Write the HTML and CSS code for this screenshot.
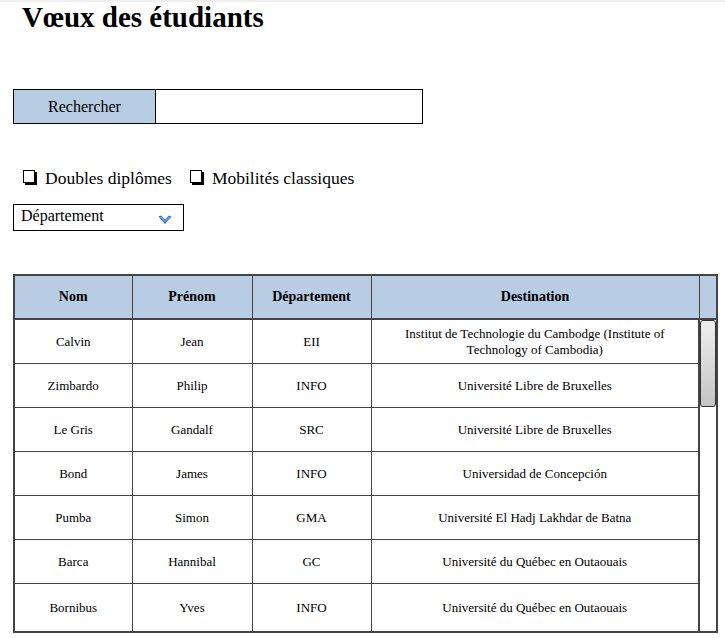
FILE: index.html
```html
<!DOCTYPE html>
<html lang="fr">
<head>
<meta charset="utf-8">
<title>Vœux des étudiants</title>
<link rel="stylesheet" href="styles.css">
</head>
<body>
<div class="topline"></div>
<h1 class="title">Vœux des étudiants</h1>

<div class="search">
  <div class="search-label">Rechercher</div>
  <div class="search-input"></div>
</div>

<div class="filters">
  <label class="check"><span class="box"></span>Doubles diplômes</label>
  <label class="check"><span class="box"></span>Mobilités classiques</label>
</div>

<div class="select">
  <span>Département</span>
  <svg class="chev" width="14" height="10" viewBox="0 0 14 10">
    <path d="M0.5 1.5 L3 0.5 L7 4.5 L11 0.5 L13.5 1.5 L7 9 Z" fill="#2f6fd6"/>
    <path d="M2.5 2 L7 6.5 L11.5 2" fill="none" stroke="#9cc3f5" stroke-width="1"/>
  </svg>
</div>

<table class="grid">
  <colgroup>
    <col class="c1"><col class="c2"><col class="c3"><col class="c4"><col class="c5">
  </colgroup>
  <thead>
    <tr><th>Nom</th><th>Prénom</th><th>Département</th><th>Destination</th><th class="sb-head"></th></tr>
  </thead>
  <tbody>
    <tr><td>Calvin</td><td>Jean</td><td>EII</td><td class="dest">Institut de Technologie du Cambodge (Institute of Technology of Cambodia)</td>
      <td class="sb" rowspan="7"><div class="thumb"></div></td></tr>
    <tr><td>Zimbardo</td><td>Philip</td><td>INFO</td><td>Université Libre de Bruxelles</td></tr>
    <tr><td>Le Gris</td><td>Gandalf</td><td>SRC</td><td>Université Libre de Bruxelles</td></tr>
    <tr><td>Bond</td><td>James</td><td>INFO</td><td>Universidad de Concepción</td></tr>
    <tr><td>Pumba</td><td>Simon</td><td>GMA</td><td>Université El Hadj Lakhdar de Batna</td></tr>
    <tr><td>Barca</td><td>Hannibal</td><td>GC</td><td>Université du Québec en Outaouais</td></tr>
    <tr class="last"><td>Bornibus</td><td>Yves</td><td>INFO</td><td>Université du Québec en Outaouais</td></tr>
  </tbody>
</table>
</body>
</html>
```

FILE: styles.css
```css
html, body {
  margin: 0;
  padding: 0;
  background: #fff;
}
body {
  font-family: "Liberation Serif", "Times New Roman", serif;
  color: #000;
}
.topline {
  height: 2px;
  background: #f0f0f0;
}
.title {
  margin: 0;
  padding-left: 22px;
  font-size: 29px;
  font-weight: bold;
  line-height: 30px;
  height: 87px;
}
.search {
  display: flex;
  margin-left: 13px;
  width: 408px;
  height: 33px;
  border: 1px solid #000;
}
.search-label {
  width: 141px;
  background: #b8cce4;
  border-right: 1px solid #000;
  display: flex;
  align-items: center;
  justify-content: center;
  font-size: 16px;
}
.search-input {
  flex: 1;
}
.filters {
  display: flex;
  gap: 18px;
  margin: 42px 0 0 23px;
  height: 24px;
  align-items: center;
}
.check {
  display: flex;
  align-items: center;
  font-size: 17.5px;
}
.box {
  display: inline-block;
  width: 10px;
  height: 11px;
  border: 1px solid #000;
  box-shadow: 2px 2px 0 #000;
  margin-right: 10px;
  margin-top: -3px;
}
.select {
  margin: 14px 0 0 13px;
  width: 171px;
  height: 27px;
  border: 1px solid #000;
  display: flex;
  align-items: center;
  justify-content: space-between;
  padding: 0 11px 0 7px;
  box-sizing: border-box;
  font-size: 16px;
}
.select span {
  margin-top: -4px;
}
.chev {
  margin-top: 5px;
}
.grid {
  margin: 43px 0 0 13px;
  border-collapse: collapse;
  table-layout: fixed;
  width: 703px;
  border: 2px solid #444;
}
.c1 { width: 118px; }
.c2 { width: 120px; }
.c3 { width: 119px; }
.c4 { width: 328px; }
.c5 { width: 18px; }
.grid th {
  background: #b8cce4;
  height: 42px;
  font-size: 14px;
  font-weight: bold;
  border: 1px solid #444;
  border-bottom: 2px solid #444;
  text-align: center;
  padding: 0;
}
.grid td {
  height: 43px;
  font-size: 13px;
  text-align: center;
  border: 1px solid #444;
  padding: 0 6px;
  line-height: 16px;
}
.grid tr.last td {
  height: 47px;
}
.grid td.dest {
  padding: 0 20px;
}
.grid td.sb {
  vertical-align: top;
  padding: 0;
  border-left: 2px solid #444;
  background: #fff;
}
.thumb {
  height: 87px;
  border: 1px solid #333;
  border-radius: 3px;
  background: linear-gradient(to bottom, #eeeeee, #c4c4c4);
  box-sizing: border-box;
}
```
